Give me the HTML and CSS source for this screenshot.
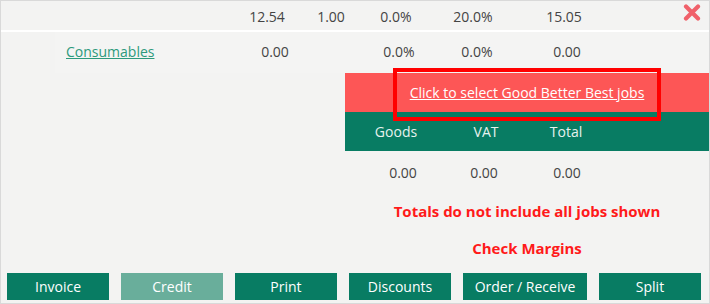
FILE: index.html
```html
<!DOCTYPE html>
<html lang="en">
<head>
  <meta charset="UTF-8" />
  <title>Job Totals</title>
  <link rel="stylesheet" href="styles.css">
</head>
<body>
  <div class="panel">
    <div class="top-row">
      <span></span>
      <span>12.54</span>
      <span>1.00</span>
      <span>0.0%</span>
      <span>20.0%</span>
      <span>15.05</span>
      <span class="close">
        <svg width="18" height="17" viewBox="0 0 18 17">
          <path d="M3 2.5 L15 14.5 M15 2.5 L3 14.5" stroke="#f0616a" stroke-width="4.2" stroke-linecap="round"/>
        </svg>
      </span>
    </div>

    <div class="line-row">
      <a href="#" class="line-name">Consumables</a>
      <span>0.00</span>
      <span></span>
      <span>0.0%</span>
      <span>0.0%</span>
      <span>0.00</span>
    </div>

    <div class="summary">
      <div class="gbb-band">
        <a href="#">Click to select Good Better Best jobs</a>
        <div class="highlight"></div>
      </div>
      <div class="totals-head">
        <span>Goods</span>
        <span>VAT</span>
        <span>Total</span>
      </div>
      <div class="totals-values">
        <span>0.00</span>
        <span>0.00</span>
        <span>0.00</span>
      </div>
      <div class="warning first">Totals do not include all jobs shown</div>
      <div class="warning">Check Margins</div>
    </div>

    <div class="buttons">
      <button>Invoice</button>
      <button class="disabled">Credit</button>
      <button>Print</button>
      <button>Discounts</button>
      <button class="wide">Order / Receive</button>
      <button>Split</button>
    </div>
  </div>
</body>
</html>
```

FILE: styles.css
```css
body {
  margin: 0;
  font-family: 'Open Sans', sans-serif;
  font-size: 14px;
  color: #444;
}

.panel {
  width: 710px;
  height: 304px;
  box-sizing: border-box;
  border: 1px solid #d9d9d9;
  background: #f3f3f2;
  display: flex;
  flex-direction: column;
}

.top-row {
  height: 27px;
  display: grid;
  grid-template-columns: 235px 62px 66px 64px 90px 92px 1fr;
  align-items: center;
  text-align: center;
  border-bottom: 2px solid #fff;
  padding-top: 2px;
}

.close {
  display: flex;
  justify-content: flex-end;
  padding-right: 8px;
  margin-top: -9px;
}

.line-row {
  margin-left: 54px;
  height: 41px;
  background: #f4f4f3;
  display: grid;
  grid-template-columns: 190px 60px 60px 68px 88px 92px 1fr;
  align-items: center;
  text-align: center;
  padding-bottom: 2px;
  box-sizing: border-box;
}

.line-name {
  text-align: left;
  padding-left: 11px;
  color: #2d9a7c;
  text-decoration: underline;
}

.summary {
  margin-left: 344px;
  display: flex;
  flex-direction: column;
}

.gbb-band {
  position: relative;
  height: 39px;
  background: #fd5656;
  display: flex;
  align-items: center;
  justify-content: center;
}

.gbb-band a {
  color: #fff;
  text-decoration: underline;
}

.highlight {
  position: absolute;
  left: 48px;
  top: -5px;
  width: 268px;
  height: 53px;
  box-sizing: border-box;
  border: 4px solid #ff0000;
}

.totals-head {
  height: 39px;
  background: #087c63;
  color: #e6f2ee;
  display: grid;
  grid-template-columns: 102px 78px 82px;
  align-items: center;
  text-align: center;
}

.totals-values {
  height: 43px;
  display: grid;
  grid-template-columns: 116px 46px 120px;
  align-items: center;
  text-align: center;
}

.warning {
  height: 42px;
  display: flex;
  align-items: center;
  justify-content: center;
  color: #ff1a1a;
  font-weight: bold;
  font-size: 15px;
}

.warning.first {
  height: 33px;
}

.buttons {
  display: flex;
  gap: 12px;
  padding-left: 6px;
  margin-top: 4px;
}

button {
  width: 102px;
  height: 27px;
  border: none;
  background: #087c63;
  color: #fff;
  font-family: 'Open Sans', sans-serif;
  font-size: 14px;
  padding: 0;
}

button.disabled {
  background: #69ae9b;
}

button.wide {
  width: 124px;
}
```
